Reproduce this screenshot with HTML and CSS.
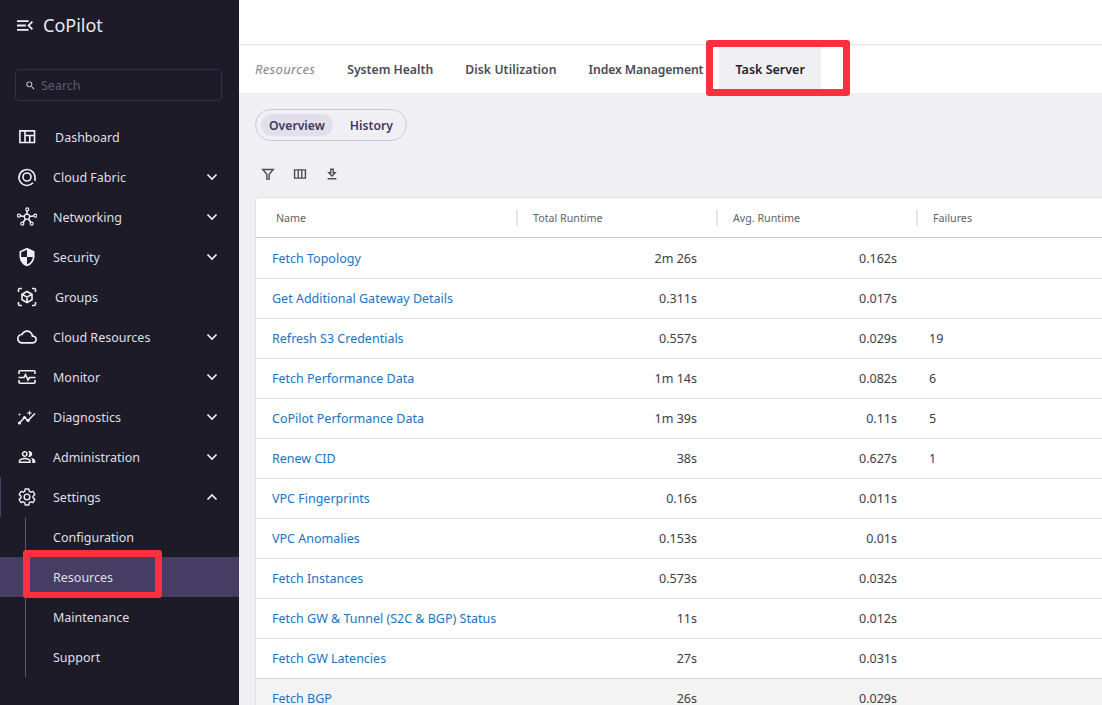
FILE: index.html
```html
<!DOCTYPE html>
<html>
<head>
<meta name="viewport" content="width=device-width, initial-scale=1">
<title>CoPilot</title>
<link rel="stylesheet" href="styles.css">
</head>
<body>

<div class="app">
  <aside class="sidebar">
    <div class="brand">
      <svg class="brand-icon" viewBox="3 6 18 12"><path d="M3 18h13v-2H3v2zm0-5h10v-2H3v2zm0-7v2h13V6H3zm18 9.59L17.42 12 21 8.41 19.59 7l-5 5 5 5L21 15.59z"/></svg>
      <span class="brand-name">CoPilot</span>
    </div>

    <label class="search">
      <svg class="search-icon" viewBox="0 0 24 24"><path d="M15.5 14h-.79l-.28-.27A6.47 6.47 0 0 0 16 9.5 6.5 6.5 0 1 0 9.5 16c1.61 0 3.09-.59 4.23-1.57l.27.28v.79l5 4.99L20.49 19l-4.99-5zm-6 0C7.01 14 5 11.99 5 9.5S7.01 5 9.5 5 14 7.01 14 9.5 11.99 14 9.5 14z"/></svg>
      <input type="text" placeholder="Search">
    </label>

    <nav class="nav">
      <a class="nav-item nav-plain">
        <svg class="nav-icon" viewBox="0 0 20 20"><path class="line" stroke-width="1.800" d="M2.900 3.900h14.600v11.600H2.900zM8 3.900v11.600M8 8.500h9.500M12.800 8.500v7"/></svg>
        <span>Dashboard</span>
      </a>
      <a class="nav-item">
        <svg class="nav-icon" viewBox="0 0 20 20"><path class="line" stroke-width="1.700" d="M16 15.800A8 8 0 1 1 18 10v4"/><circle class="line" cx="10" cy="10" r="4" stroke-width="2.200"/></svg>
        <span>Cloud Fabric</span>
        <svg class="chevron" viewBox="0 0 12 12"><path d="M1.500 3.500 6 8l4.500-4.500"/></svg>
      </a>
      <a class="nav-item">
        <svg class="nav-icon" viewBox="0 0 20 20"><path class="line" stroke-width="1.300" d="M10 9.700V2.300M10 9.700 2 8.700M10 9.700 18.300 8.700M10 9.700 5.300 16.700M10 9.700 14.700 16.700"/><circle class="dot" cx="10" cy="9.700" r="2.600"/><circle class="dot" cx="10.300" cy="2.300" r="1.500"/><circle class="dot" cx="2" cy="8.700" r="1.500"/><circle class="dot" cx="18.300" cy="8.700" r="1.500"/><circle class="dot" cx="5.300" cy="16.700" r="1.500"/><circle class="dot" cx="14.700" cy="16.700" r="1.500"/></svg>
        <span>Networking</span>
        <svg class="chevron" viewBox="0 0 12 12"><path d="M1.500 3.500 6 8l4.500-4.500"/></svg>
      </a>
      <a class="nav-item">
        <svg class="nav-icon" viewBox="0 0 24 24"><path d="M12 1L3 5v6c0 5.550 3.840 10.740 9 12 5.160-1.260 9-6.450 9-12V5l-9-4zm0 10.990h7c-.53 4.120-3.280 7.790-7 8.940V12H5V6.300l7-3.110v8.800z"/></svg>
        <span>Security</span>
        <svg class="chevron" viewBox="0 0 12 12"><path d="M1.500 3.500 6 8l4.500-4.500"/></svg>
      </a>
      <a class="nav-item nav-plain">
        <svg class="nav-icon" viewBox="0 0 20 20"><path class="line" d="M1.500 5V2.800q0-1.300 1.300-1.300H5M15 1.500h2.200q1.300 0 1.300 1.300V5M18.500 15v2.200q0 1.300-1.300 1.300H15M5 18.500H2.800q-1.300 0-1.300-1.300V15" stroke-width="1.300"/><path class="line" d="M10 4.500 15 7.300v5.400L10 15.500 5 12.700V7.300zM5 7.300l5 2.800 5-2.800M10 10.100v5.400" stroke-width="1.400"/></svg>
        <span>Groups</span>
      </a>
      <a class="nav-item">
        <svg class="nav-icon" viewBox="0 0 24 24"><path d="M19.350 10.040C18.670 6.590 15.640 4 12 4 9.110 4 6.600 5.640 5.350 8.040 2.340 8.360 0 10.910 0 14c0 3.310 2.690 6 6 6h13c2.760 0 5-2.240 5-5 0-2.640-2.050-4.780-4.650-4.960zM19 18H6c-2.210 0-4-1.790-4-4 0-2.050 1.530-3.760 3.560-3.970l1.070-.11.5-.95C8.080 7.140 9.940 6 12 6c2.620 0 4.880 1.860 5.390 4.430l.3 1.500 1.530.11c1.560.1 2.780 1.410 2.780 2.960 0 1.650-1.350 3-3 3z"/></svg>
        <span>Cloud Resources</span>
        <svg class="chevron" viewBox="0 0 12 12"><path d="M1.500 3.500 6 8l4.500-4.500"/></svg>
      </a>
      <a class="nav-item">
        <svg class="nav-icon" viewBox="0 0 20 20"><path class="line" d="M2 7V4.800q0-1 1-1h14q1 0 1 1V7M2 13v2.200q0 1 1 1h14q1 0 1-1V13" stroke-width="1.500"/><path class="line" d="M1.500 10.500H7l1.500-3 2.500 5.500 1.500-2.500h6" stroke-width="1.400"/></svg>
        <span>Monitor</span>
        <svg class="chevron" viewBox="0 0 12 12"><path d="M1.500 3.500 6 8l4.500-4.500"/></svg>
      </a>
      <a class="nav-item">
        <svg class="nav-icon" viewBox="0 0 20 20"><path class="line" d="M2 16.500 7.500 10.500 11 13.500 18 6.500" stroke-width="1.900"/><circle cx="2.500" cy="16" r="1.600"/><circle cx="7.500" cy="10.500" r="1.600"/><circle cx="11" cy="13.500" r="1.600"/><circle cx="2.500" cy="7.500" r="1"/><path d="M12.500 3 13.200 5.300 15.500 6 13.200 6.700 12.500 9 11.800 6.700 9.500 6 11.800 5.300z"/></svg>
        <span>Diagnostics</span>
        <svg class="chevron" viewBox="0 0 12 12"><path d="M1.500 3.500 6 8l4.500-4.500"/></svg>
      </a>
      <a class="nav-item">
        <svg class="nav-icon icon-small" viewBox="0 0 24 24"><path d="M16.670 13.130C18.040 14.060 19 15.320 19 17v3h4v-3c0-2.180-3.570-3.470-6.330-3.870zM15 12c2.210 0 4-1.790 4-4s-1.790-4-4-4c-.47 0-.91.1-1.330.24C14.500 5.270 15 6.580 15 8s-.5 2.730-1.330 3.760c.42.14.86.24 1.330.24zM9 12c2.210 0 4-1.790 4-4s-1.790-4-4-4-4 1.790-4 4 1.790 4 4 4zm0-6c1.100 0 2 .9 2 2s-.9 2-2 2-2-.9-2-2 .9-2 2-2zM9 13c-2.670 0-8 1.340-8 4v3h16v-3c0-2.660-5.330-4-8-4zm6 5H3v-.99C3.200 16.290 6.300 15 9 15s5.800 1.290 6 2z"/></svg>
        <span>Administration</span>
        <svg class="chevron" viewBox="0 0 12 12"><path d="M1.500 3.500 6 8l4.500-4.500"/></svg>
      </a>
      <a class="nav-item nav-open">
        <svg class="nav-icon" viewBox="0 0 24 24"><path class="line" stroke-width="1.900" d="M19.140 12.940c.04-.3.06-.61.06-.94 0-.32-.02-.64-.07-.94l2.030-1.580c.18-.14.23-.41.12-.61l-1.920-3.320c-.12-.22-.37-.29-.59-.22l-2.390.96c-.5-.38-1.030-.7-1.620-.94l-.36-2.540c-.04-.24-.24-.41-.48-.41h-3.840c-.24 0-.43.17-.47.41l-.36 2.540c-.59.24-1.130.57-1.620.94l-2.390-.96c-.22-.08-.47 0-.59.22L2.740 8.870c-.12.21-.08.47.12.61l2.030 1.580c-.05.3-.09.63-.09.94s.02.64.07.94l-2.030 1.580c-.18.14-.23.41-.12.61l1.920 3.320c.12.22.37.29.59.22l2.390-.96c.5.38 1.030.7 1.620.94l.36 2.540c.05.24.24.41.48.41h3.840c.24 0 .44-.17.47-.41l.36-2.540c.59-.24 1.130-.56 1.620-.94l2.390.96c.22.08.47 0 .59-.22l1.920-3.320c.12-.22.07-.47-.12-.61z"/><circle class="line" cx="12" cy="12" r="3.400" stroke-width="1.900"/></svg>
        <span>Settings</span>
        <svg class="chevron" viewBox="0 0 12 12"><path d="M1.500 8.500 6 4l4.500 4.500"/></svg>
      </a>
      <div class="subnav">
        <a class="sub-item">Configuration</a>
        <a class="sub-item sub-active">Resources</a>
        <a class="sub-item">Maintenance</a>
        <a class="sub-item">Support</a>
      </div>
    </nav>
  </aside>

  <main class="main">
    <div class="topbar"></div>

    <div class="tabs">
      <span class="tab tab-label">Resources</span>
      <span class="tab">System Health</span>
      <span class="tab tab-disk">Disk Utilization</span>
      <span class="tab tab-index">Index Management</span>
      <span class="tab tab-active">Task Server</span>
    </div>

    <div class="content">
      <div class="toggle">
        <span class="toggle-btn toggle-on">Overview</span>
        <span class="toggle-btn">History</span>
      </div>

      <div class="toolbar">
        <svg class="tool" viewBox="0 0 16 16"><path d="M2 2.800h12L9.300 8.200V13.800H6.700V8.200z"/></svg>
        <svg class="tool" viewBox="0 0 16 16"><path d="M1.800 3.300h12.400v9.400H1.800zM6 3.300v9.400M10 3.300v9.400"/></svg>
        <svg class="tool" viewBox="0 0 16 16"><path d="M6.600 2.500h2.800v4h2.300L8 10.300 4.300 6.500h2.300zM3 13.500h10"/></svg>
      </div>

      <div class="card">
        <table class="grid">
          <colgroup>
            <col class="col-name"><col class="col-time"><col class="col-time"><col class="col-fail">
          </colgroup>
          <thead>
            <tr>
              <th>Name</th>
              <th>Total Runtime</th>
              <th>Avg. Runtime</th>
              <th>Failures</th>
            </tr>
          </thead>
          <tbody>
            <tr><td><a>Fetch Topology</a></td><td class="num">2m 26s</td><td class="num">0.162s</td><td></td></tr>
            <tr><td><a>Get Additional Gateway Details</a></td><td class="num">0.311s</td><td class="num">0.017s</td><td></td></tr>
            <tr><td><a>Refresh S3 Credentials</a></td><td class="num">0.557s</td><td class="num">0.029s</td><td>19</td></tr>
            <tr><td><a>Fetch Performance Data</a></td><td class="num">1m 14s</td><td class="num">0.082s</td><td>6</td></tr>
            <tr><td><a>CoPilot Performance Data</a></td><td class="num">1m 39s</td><td class="num">0.11s</td><td>5</td></tr>
            <tr><td><a>Renew CID</a></td><td class="num">38s</td><td class="num">0.627s</td><td>1</td></tr>
            <tr><td><a>VPC Fingerprints</a></td><td class="num">0.16s</td><td class="num">0.011s</td><td></td></tr>
            <tr><td><a>VPC Anomalies</a></td><td class="num">0.153s</td><td class="num">0.01s</td><td></td></tr>
            <tr><td><a>Fetch Instances</a></td><td class="num">0.573s</td><td class="num">0.032s</td><td></td></tr>
            <tr><td><a>Fetch GW &amp; Tunnel (S2C &amp; BGP) Status</a></td><td class="num">11s</td><td class="num">0.012s</td><td></td></tr>
            <tr class="before-hover"><td><a>Fetch GW Latencies</a></td><td class="num">27s</td><td class="num">0.031s</td><td></td></tr>
            <tr class="row-hover"><td><a>Fetch BGP</a></td><td class="num">26s</td><td class="num">0.029s</td><td></td></tr>
          </tbody>
        </table>
      </div>
    </div>
  </main>
</div>

<!-- red boxes drawn on top of the screenshot -->
<div class="mark mark-tab"></div>
<div class="mark mark-side"></div>

</body>
</html>
```

FILE: styles.css
```css
* {
  box-sizing: border-box;
}

html, body {
  height: 100%;
}

body {
  margin: 0;
  overflow: hidden;
  font-family: "Noto Sans", "Liberation Sans", sans-serif;
  font-size: 12.5px;
  color: #3c3c44;
}

.app {
  display: flex;
  height: 100vh;
}

/* Sidebar */
.sidebar {
  flex: 0 0 239px;
  background: #1e1b29;
  color: #dfdfe4;
  overflow: hidden;
}

.brand {
  display: flex;
  align-items: center;
  gap: 10px;
  height: 50px;
  padding-left: 17px;
}

.brand-icon {
  width: 16px;
  height: 11px;
  fill: #f0f0f3;
}

.brand-name {
  font-size: 18px;
  color: #e9e9ed;
}

.search {
  display: flex;
  align-items: center;
  gap: 5px;
  height: 32px;
  margin: 19px 17px 0 15px;
  padding-left: 9px;
  border: 1px solid #33304a;
  border-radius: 4px;
}

.search-icon {
  width: 11px;
  height: 11px;
  fill: #d8d8de;
}

.search input {
  flex: 1;
  min-width: 0;
  border: none;
  padding: 0;
  background: none;
  outline: none;
  font: inherit;
  color: #dfdfe4;
}

.search input::placeholder {
  color: #5d5a6b;
  opacity: 1;
}

.nav {
  margin-top: 16px;
}

.nav-item {
  display: flex;
  align-items: center;
  gap: 16px;
  height: 40px;
  padding: 0 21px 0 17px;
}

.nav-plain {
  gap: 18px;
}

.nav-open {
  border-left: 1px solid #4a3f6b;
  padding-left: 16px;
}

.nav-icon {
  flex: none;
  width: 20px;
  height: 20px;
  fill: #f0f0f3;
}

.icon-small {
  width: 18px;
  height: 18px;
  margin: 0 1px;
}

.nav-icon .line {
  fill: none;
  stroke: #f0f0f3;
  stroke-width: 1.600;
}

.nav-icon .dot {
  fill: #1e1b29;
  stroke: #f0f0f3;
  stroke-width: 1.200;
}

.chevron {
  flex: none;
  width: 12px;
  height: 12px;
  margin-left: auto;
  fill: none;
  stroke: #f0f0f3;
  stroke-width: 1.700;
}

.subnav {
  position: relative;
}

.subnav:before {
  content: "";
  position: absolute;
  left: 25px;
  top: 0;
  bottom: 0;
  width: 1px;
  background: #5b5868;
}

.sub-item {
  display: flex;
  align-items: center;
  height: 40px;
  padding-left: 53px;
}

.sub-active {
  background: #473c64;
}

/* Main area */
.main {
  flex: 1;
  min-width: 0;
  display: flex;
  flex-direction: column;
  overflow: hidden;
}

.topbar {
  flex: none;
  height: 45px;
  background: #fff;
  border-bottom: 1px solid #e3e3e9;
}

.tabs {
  flex: none;
  display: flex;
  height: 48px;
  background: #fff;
}

.tab {
  display: flex;
  align-items: center;
  padding: 0 16px;
  font-size: 12.2px;
  font-weight: 600;
  color: #4b4b54;
}

.tab-label {
  font-size: 13px;
  font-style: italic;
  font-weight: 400;
  letter-spacing: .32px;
  color: #85858e;
}

.tab-disk {
  letter-spacing: .1px;
}

.tab-index {
  letter-spacing: -.1px;
}

.tab-active {
  font-size: 12.5px;
  background: #f0f0f4;
  color: #24212e;
}

.content {
  flex: 1;
  padding: 16px 0 0 16px;
  background: #f0f0f4;
}

.toggle {
  display: inline-flex;
  align-items: center;
  height: 32px;
  padding: 0 5px;
  border: 1px solid #cbcad3;
  border-radius: 16px;
  vertical-align: top;
}

.toggle-btn {
  display: flex;
  align-items: center;
  height: 22px;
  padding: 0 8px;
  border-radius: 11px;
  font-weight: 600;
  font-size: 12.2px;
  color: #42385f;
}

.toggle-btn + .toggle-btn {
  margin-left: 9px;
}

.toggle-on {
  background: #e1dfec;
}

.toolbar {
  display: flex;
  gap: 18px;
  align-items: center;
  height: 40px;
  margin: 13px 0 3px;
  padding-left: 6px;
}

.tool {
  width: 14px;
  height: 14px;
  fill: none;
  stroke: #4c4c55;
  stroke-width: 1.600;
}

.card {
  width: 900px;
  background: #fff;
  border: 1px solid #dfdfe6;
  border-right: none;
  border-bottom: none;
  border-top-left-radius: 4px;
}

/* Table */
.grid {
  width: 900px;
  table-layout: fixed;
  border-collapse: separate;
  border-spacing: 0;
}

.col-name {
  width: 261px;
}

.col-time {
  width: 200px;
}

.grid th {
  position: relative;
  height: 40px;
  padding: 0 0 0 16px;
  border-bottom: 1px solid #c9c8d4;
  text-align: left;
  font-size: 10.7px;
  font-weight: 400;
  color: #5f5f69;
}

.grid th:first-child {
  padding-left: 20px;
}

.grid th + th:before {
  content: "";
  position: absolute;
  left: -1px;
  top: 12px;
  width: 2px;
  height: 16px;
  background: #e4e4ea;
}

.grid td {
  height: 40px;
  padding: 0 0 0 12px;
  border-bottom: 1px solid #e3e3e9;
}

.grid tbody tr:first-child td {
  height: 41px;
}

.grid td:first-child {
  padding-left: 16px;
}

.grid a {
  color: #1a73c2;
}

.grid .num {
  padding: 0 20px 0 0;
  text-align: right;
}

.before-hover td {
  border-bottom-color: #d5d5da;
}

.row-hover {
  background: #f3f3f4;
}

/* Annotation boxes */
.mark {
  position: absolute;
  border: 7px solid #fe303f;
  border-radius: 3px;
}

.mark-tab {
  left: 706px;
  top: 40px;
  width: 144px;
  height: 56px;
}

.mark-side {
  left: 23px;
  top: 550px;
  width: 139px;
  height: 48px;
  border-bottom-width: 6px;
}
```
